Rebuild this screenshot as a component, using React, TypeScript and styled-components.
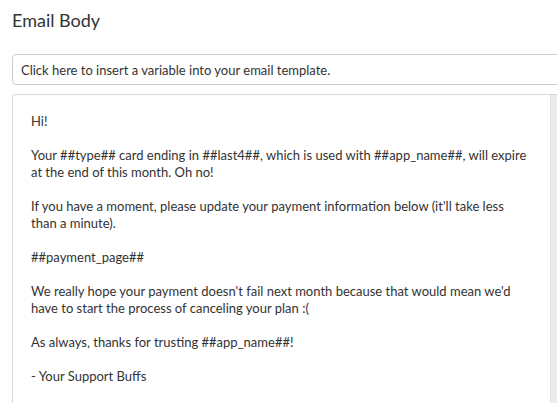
import React from "react";
import styled, { createGlobalStyle } from "styled-components";

const Global = createGlobalStyle`
  html, body { margin: 0; padding: 0; background: #fff; overflow: hidden; }
  body { font-family: Lato, "Noto Sans", sans-serif; color: #333; }
`;

const Page = styled.div`
  width: 557px;
  height: 403px;
  overflow: hidden;
  padding: 8px 0 0 12px;
  box-sizing: border-box;
  display: flex;
  flex-direction: column;
`;

const Title = styled.h2`
  margin: 0 0 22px 0;
  font-size: 18px;
  font-weight: 400;
  line-height: 24px;
  color: #333;
`;

const VariableInput = styled.div`
  width: 600px;
  height: 31px;
  box-sizing: border-box;
  border: 1px solid #ccc;
  border-radius: 4px;
  padding: 0 8px;
  display: flex;
  align-items: center;
  font-size: 13px;
  color: #333;
  flex-shrink: 0;
`;

const EditorBox = styled.div`
  margin-top: 9px;
  width: 545px;
  flex: 1;
  box-sizing: border-box;
  border: 1px solid #d6d6d6;
  border-right: none;
  border-radius: 4px 0 0 0;
  display: flex;
`;

const EditorText = styled.div`
  flex: 1;
  padding: 18px 18px;
  font-size: 13px;
  line-height: 17px;
  white-space: pre;
  color: #333;
`;

const ScrollTrack = styled.div`
  width: 6px;
  background: #ececec;
  border-left: 1px solid #e2e2e2;
`;

const body = `Hi!

Your ##type## card ending in ##last4##, which is used with ##app_name##, will expire
at the end of this month. Oh no!

If you have a moment, please update your payment information below (it'll take less
than a minute).

##payment_page##

We really hope your payment doesn't fail next month because that would mean we'd
have to start the process of canceling your plan :(

As always, thanks for trusting ##app_name##!

- Your Support Buffs`;

export default function App() {
  return (
    <>
      <Global />
      <Page>
        <Title>Email Body</Title>
        <VariableInput>Click here to insert a variable into your email template.</VariableInput>
        <EditorBox>
          <EditorText>{body}</EditorText>
          <ScrollTrack />
        </EditorBox>
      </Page>
    </>
  );
}
